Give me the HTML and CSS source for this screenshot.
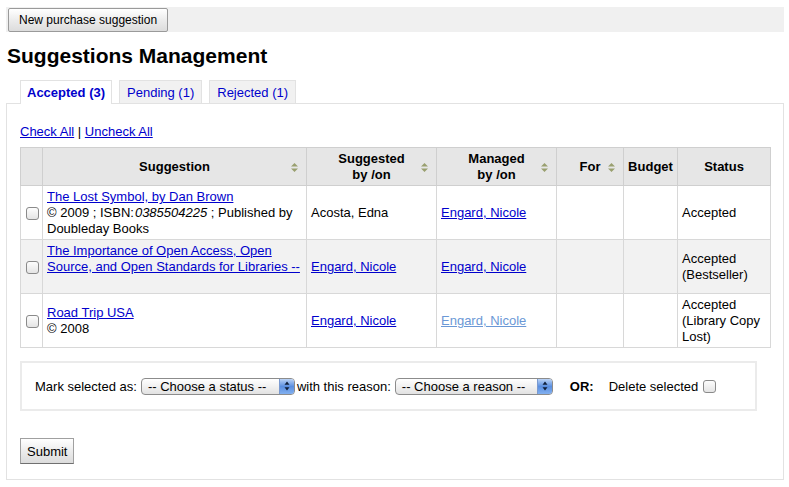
FILE: index.html
```html
<!DOCTYPE html>
<html>
<head>
<meta charset="utf-8">
<link rel="stylesheet" href="styles.css">
</head>
<body>
<div class="toolbar"><button class="btn">New purchase suggestion</button></div>
<h1>Suggestions Management</h1>
<ul class="tabs">
  <li class="tab active">Accepted (3)</li>
  <li class="tab">Pending (1)</li>
  <li class="tab">Rejected (1)</li>
</ul>
<div class="panel">
  <div class="checks"><a href="#">Check All</a> | <a href="#">Uncheck All</a></div>
  <table class="grid">
    <colgroup>
      <col style="width:22px"><col style="width:264px"><col style="width:130px"><col style="width:120px"><col style="width:67px"><col style="width:54px"><col style="width:93px">
    </colgroup>
    <thead>
      <tr>
        <th></th>
        <th class="sort">Suggestion<svg class="si" viewBox="0 0 7 9"><path d="M3.5 0 L7 3.6 L0 3.6Z M3.5 9 L7 5.4 L0 5.4Z"/></svg></th>
        <th class="sort">Suggested<br>by /on<svg class="si" viewBox="0 0 7 9"><path d="M3.5 0 L7 3.6 L0 3.6Z M3.5 9 L7 5.4 L0 5.4Z"/></svg></th>
        <th class="sort">Managed<br>by /on<svg class="si" viewBox="0 0 7 9"><path d="M3.5 0 L7 3.6 L0 3.6Z M3.5 9 L7 5.4 L0 5.4Z"/></svg></th>
        <th class="sort">For<svg class="si" viewBox="0 0 7 9"><path d="M3.5 0 L7 3.6 L0 3.6Z M3.5 9 L7 5.4 L0 5.4Z"/></svg></th>
        <th>Budget</th>
        <th>Status</th>
      </tr>
    </thead>
    <tbody>
      <tr>
        <td class="cb"><span class="box"></span></td>
        <td><a href="#">The Lost Symbol, by Dan Brown</a><br>© 2009 ; ISBN:<i class="isbn">0385504225</i> ; Published by Doubleday Books</td>
        <td>Acosta, Edna</td>
        <td><a href="#">Engard, Nicole</a></td>
        <td></td>
        <td></td>
        <td>Accepted</td>
      </tr>
      <tr class="alt">
        <td class="cb"><span class="box"></span></td>
        <td><a href="#">The Importance of Open Access, Open Source, and Open Standards for Libraries --</a><br>&nbsp;</td>
        <td><a href="#">Engard, Nicole</a></td>
        <td><a href="#">Engard, Nicole</a></td>
        <td></td>
        <td></td>
        <td>Accepted<br>(Bestseller)</td>
      </tr>
      <tr>
        <td class="cb"><span class="box"></span></td>
        <td><a href="#">Road Trip USA</a><br>© 2008</td>
        <td><a href="#">Engard, Nicole</a></td>
        <td><a href="#" class="light">Engard, Nicole</a></td>
        <td></td>
        <td></td>
        <td>Accepted<br>(Library Copy<br>Lost)</td>
      </tr>
    </tbody>
  </table>
  <div class="markbox">
    <span>Mark selected as:</span>
    <span class="sel s1"><span class="sel-text">-- Choose a status --</span><span class="sel-arrow"><svg viewBox="0 0 6 10"><path d="M3 0.5 L5.5 3.8 L0.5 3.8Z M3 9.5 L5.5 6.2 L0.5 6.2Z"/></svg></span></span>
    <span>with this reason:</span>
    <span class="sel s2"><span class="sel-text">-- Choose a reason --</span><span class="sel-arrow"><svg viewBox="0 0 6 10"><path d="M3 0.5 L5.5 3.8 L0.5 3.8Z M3 9.5 L5.5 6.2 L0.5 6.2Z"/></svg></span></span>
    <b class="or">OR:</b>
    <span class="del">Delete selected <span class="box"></span></span>
  </div>
  <button class="btn submit">Submit</button>
</div>
</body>
</html>
```

FILE: styles.css
```css
html, body { margin: 0; padding: 0; background: #fff; }
body {
  padding: 7px 5px 0 6px;
  font-family: "Liberation Sans", Arial, sans-serif;
  font-size: 13px;
  color: #000;
}
a { color: #0000cc; }
a.light { color: #6b98d6; }
.toolbar {
  background: #f0f0f0;
  height: 25px;
  padding: 1px 2px 0;
  box-sizing: border-box;
}
.btn {
  font-family: "Liberation Sans", Arial, sans-serif;
  font-size: 12px;
  color: #000;
  height: 24px;
  padding: 0 10px;
  border: 1px solid #9a9a9a;
  border-radius: 2px;
  background: linear-gradient(#ffffff, #ececec 50%, #dcdcdc);
}
h1 {
  font-size: 21px;
  font-weight: bold;
  margin: 11px 0 0 1px;
  line-height: 26px;
}
.tabs {
  list-style: none;
  margin: 11px 0 0;
  padding: 0 0 0 14px;
  display: flex;
  gap: 7px;
  position: relative;
  z-index: 1;
}
.tab {
  height: 23px;
  box-sizing: border-box;
  padding: 4px 7px 0;
  border: 1px solid #e2e2e2;
  border-bottom: none;
  background: #f1f1f1;
  color: #0000cc;
  font-size: 13px;
  line-height: 16px;
}
.tab.active {
  background: #fff;
  font-weight: bold;
  height: 24px;
  margin-bottom: -1px;
  padding: 4px 6px 0;
}
.panel {
  border: 1px solid #e2e2e2;
  width: 778px;
  box-sizing: border-box;
  height: 377px;
  padding: 20px 13px 0 13px;
}
.checks { line-height: 16px; }
.grid {
  margin-top: 7px;
  border-collapse: collapse;
  table-layout: fixed;
  width: 750px;
  border: 1px solid #c8c8c8;
}
.grid th {
  background: #e6e6e6;
  height: 37px;
  font-weight: bold;
  text-align: center;
  border: 1px solid #cfcfcf;
  padding: 0 4px;
  line-height: 16px;
  position: relative;
}
.grid th .si {
  position: absolute;
  right: 8px;
  top: 15px;
  width: 7px;
  height: 9px;
  fill: #9aa070;
}
.grid td {
  border: 1px solid #d8d8d8;
  padding: 3px 4px 2px;
  line-height: 16px;
  vertical-align: middle;
}
.grid tr.alt td { background: #f2f2f2; }
.grid td.cb { padding: 0 0 0 5px; }
.isbn { padding-left: 1px; }
.box {
  display: inline-block;
  width: 11px;
  height: 11px;
  border: 1px solid #8a8a8a;
  border-radius: 3px;
  background: linear-gradient(#fdfdfd, #e4e4e4);
  vertical-align: middle;
  box-sizing: content-box;
}
.markbox {
  margin-top: 13px;
  width: 737px;
  box-sizing: border-box;
  height: 50px;
  border: 2px solid #ebebeb;
  display: flex;
  align-items: center;
  padding: 0 0 0 13px;
}
.sel {
  display: inline-flex;
  height: 17px;
  box-sizing: border-box;
  border: 1px solid #8c8c8c;
  border-radius: 4px;
  background: linear-gradient(#ffffff, #f1f1f1 50%, #e2e2e2);
  overflow: hidden;
  font-size: 13px;
  line-height: 15px;
  margin: 0 2px 0 4px;
}
.sel-text { flex: 1; padding-left: 6px; }
.sel-arrow {
  width: 14px;
  background: linear-gradient(#bcd4f6, #5a8fe0 50%, #82b0f0);
  border-left: 1px solid #7a9ad0;
  display: flex;
  align-items: center;
  justify-content: center;
}
.sel-arrow svg { width: 6px; height: 10px; fill: #10203a; }
.s1 { width: 154px; }
.s2 { width: 158px; margin-left: 4px; }
.or { margin-left: 15px; }
.del { margin-left: 15px; }
.del .box { margin-left: 1px; margin-top: -2px; }
.submit {
  margin-top: 27px;
  height: 26px;
  padding: 0 6px;
  font-size: 13px;
  border-radius: 0;
  border: 1px solid #a0a0a0;
  border-bottom-color: #707070;
}
```
